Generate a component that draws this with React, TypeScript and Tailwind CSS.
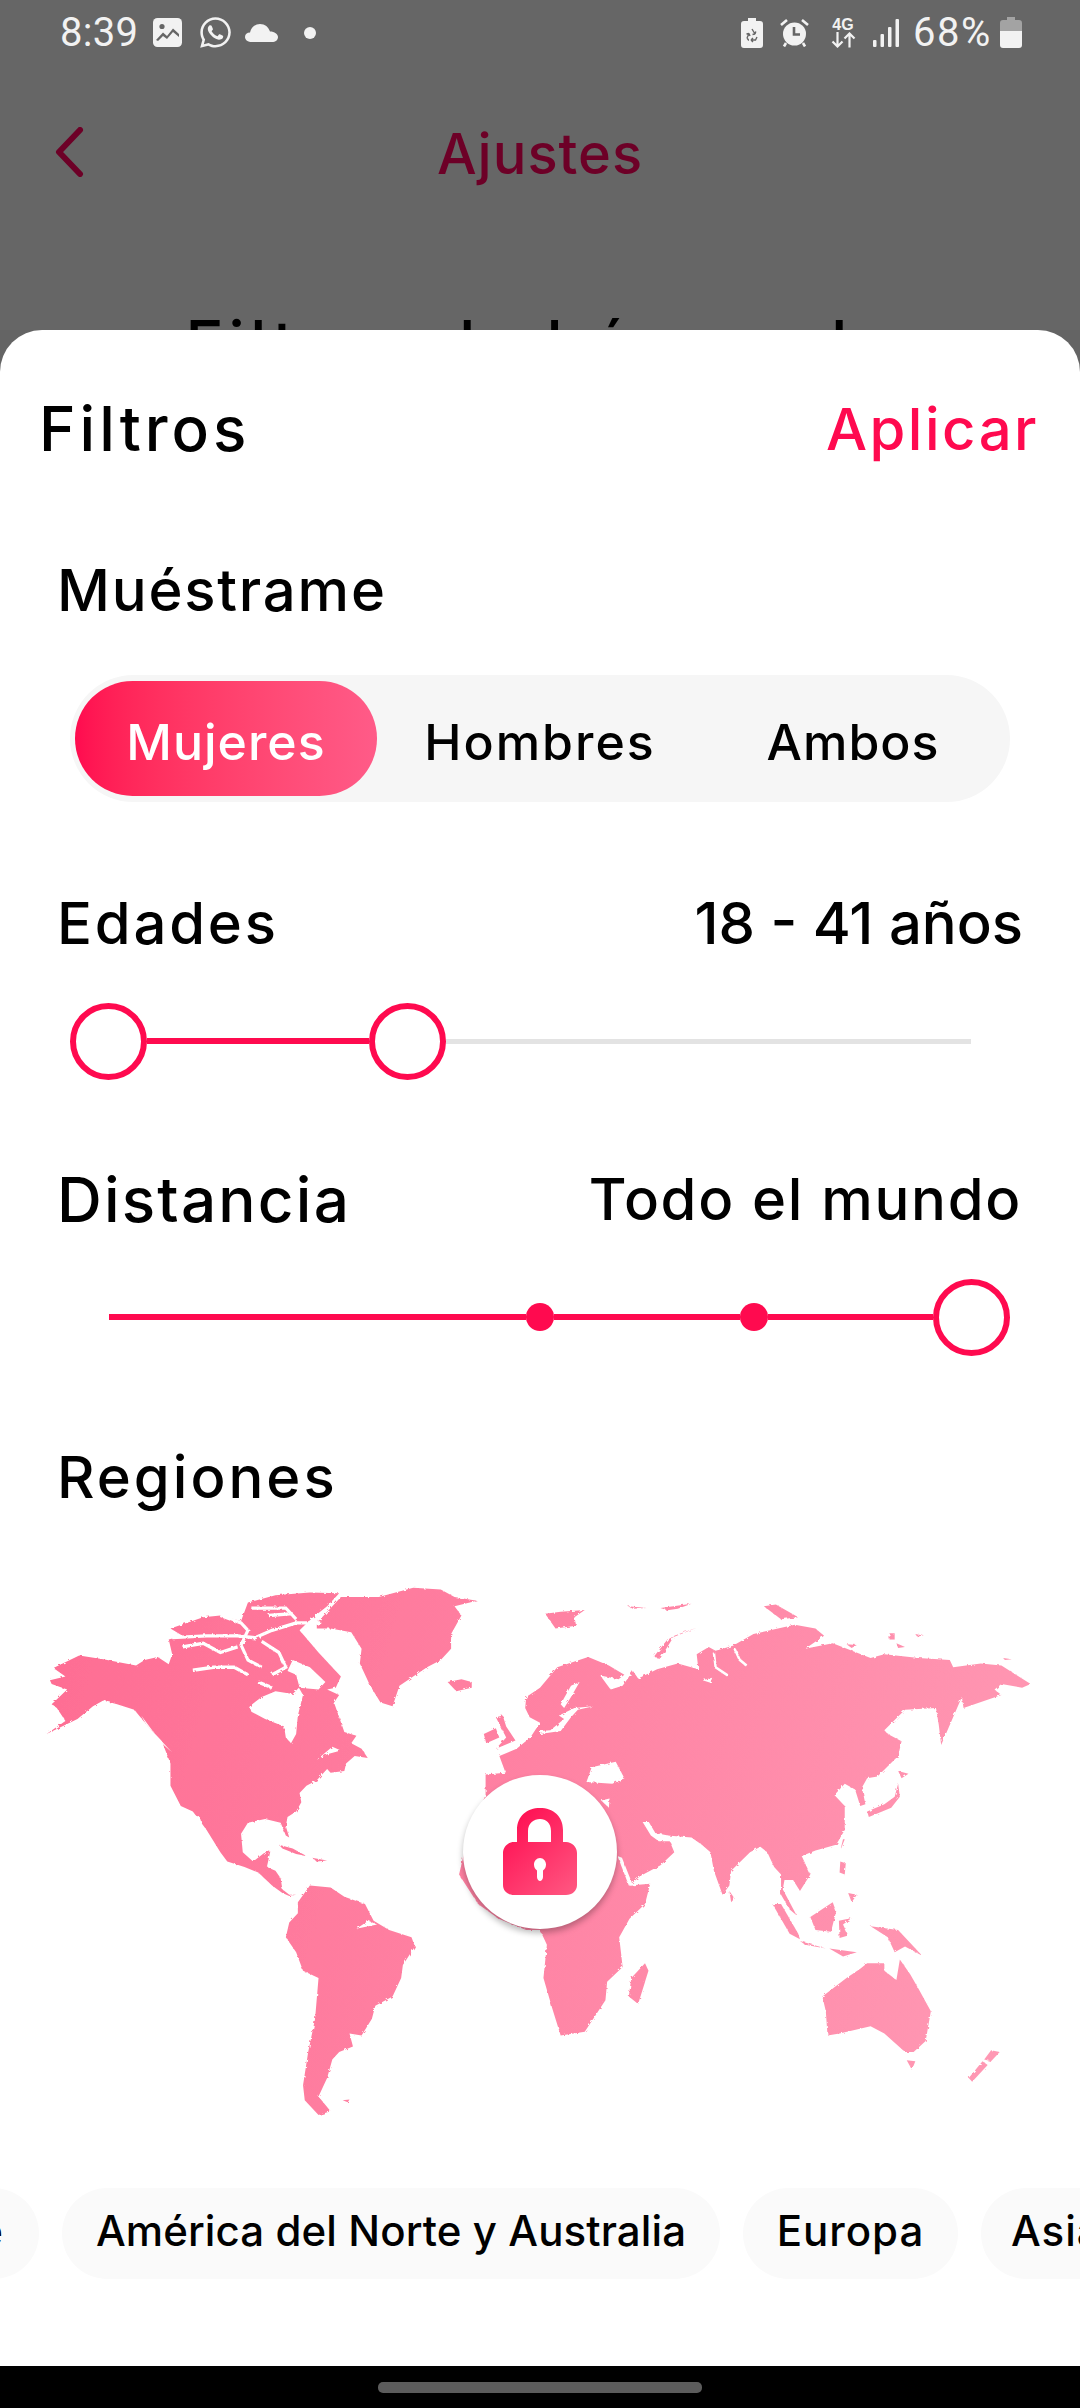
import React from "react";
import { FaWhatsapp } from "react-icons/fa";

const Thumb = () => <div className="w-[77px] h-[77px] shrink-0 rounded-full border-[6px] border-[#ff0a4f] bg-white" />;
const Dot = () => <div className="w-[28px] h-[28px] shrink-0 rounded-full bg-[#ff0a4f]" />;

function WorldMap() {
  const left = "scale(0.34435 0.36996)";
  const right = "translate(540 0) scale(0.34435 0.36996)";
  return (
    <svg width="1080" height="580" viewBox="0 0 1080 580" className="block">
      <defs>
        <linearGradient id="gl" gradientUnits="userSpaceOnUse" x1="0" y1="0" x2="3136" y2="900">
          <stop offset="0" stopColor="#fe6a91" />
          <stop offset="1" stopColor="#ff9ab5" />
        </linearGradient>
        <linearGradient id="gr" gradientUnits="userSpaceOnUse" x1="-1568" y1="0" x2="1568" y2="900">
          <stop offset="0" stopColor="#fe6a91" />
          <stop offset="1" stopColor="#ff9ab5" />
        </linearGradient>
        <filter id="rough" x="-2%" y="-2%" width="104%" height="104%">
          <feTurbulence type="fractalNoise" baseFrequency="0.3" numOctaves="2" seed="4" />
          <feDisplacementMap in="SourceGraphic" scale="3" />
        </filter>
      </defs>
      <g filter="url(#rough)">
        <g transform={left} fill="url(#gl)">
          {/* North America with the Arctic archipelago */}
          <path d="M155 292L230 258L300 268L395 285L420 270L458 262L490 282L500 255L490 215L530 205L495 185L590 155L640 150L700 165L720 115L800 95L900 88L985 90L950 125L905 158L870 190L925 250L990 315L975 345L950 350L985 365L970 385L1000 465L1035 475L1020 495L1050 510L1068 535L1030 530L1005 550L1000 570L960 575L950 565L920 595L890 610L870 630L875 655L860 680L835 695L830 720L840 750L830 745L815 710L770 700L720 710L700 740L705 790L735 815L770 790L785 788L775 830L800 840L815 860L820 890L840 905L860 905L840 908L820 900L790 880L750 845L710 830L660 815L640 790L600 730L560 680L525 665L495 610L495 550L470 490L430 450L390 405L340 390L300 380L270 395L225 430L135 470L190 435L165 400L150 390L195 350L150 335L145 325L190 315Z" />
          {/* Greenland */}
          <path d="M920 170L990 100L1100 100L1200 75L1280 80L1320 100L1385 110L1320 125L1340 150L1310 200L1310 240L1280 270L1240 290L1160 340L1140 395L1105 385L1075 340L1045 280L1050 240L1020 195L960 185L920 185Z" />
          {/* Iceland, UK, Ireland, Caribbean */}
          <path d="M1300 330L1340 322L1370 330L1370 345L1325 355Z" />
          <path d="M1440 425L1460 420L1470 450L1497 488L1440 510L1470 480Z" />
          <path d="M1405 470L1440 455L1450 480L1412 495Z" />
          <path d="M810 770L850 780L890 800L860 795L820 780Z" />
          <path d="M905 805L950 812L920 815Z" />
          {/* South America */}
          <path d="M865 925L900 880L960 885L1000 910L1060 930L1085 975L1130 1000L1195 1020L1205 1045L1170 1095L1165 1130L1140 1180L1090 1205L1080 1240L1050 1285L1015 1280L1025 1315L985 1330L965 1350L950 1400L925 1450L960 1490L925 1500L885 1460L880 1420L895 1330L915 1240L925 1130L880 1110L860 1060L830 1020L840 980L865 955Z" />
          <path d="M995 1460L1015 1458L1010 1466Z" />
        </g>
        <g transform={left} fill="#ffffff">
          {/* Hudson Bay, Foxe Basin */}
          <path d="M725 395L760 370L800 355L850 362L868 345L880 365L865 420L860 470L845 495L830 480L825 450L770 430L730 410Z" />
          <path d="M850 270L900 290L945 330L925 350L870 345L860 310L835 300Z" />
          <path d="M565 690L580 695L605 770L575 735Z" />
          <path d="M1035 997L1070 975L1095 985L1070 990Z" />
          <path d="M920 540L965 505L990 515L950 525Z" />
          <path d="M410 420L425 445L500 520L470 495Z" />
        </g>
        <g transform={left} fill="none" stroke="#ffffff" strokeWidth="9">
          <path d="M560 298L620 290L680 290L720 310" />
          <path d="M530 235L590 225L640 250L690 235" />
          <path d="M500 210L600 205L690 205L740 210L790 190L860 170L930 170" />
          <path d="M640 150L700 170L720 190L700 230L720 270L760 290" />
          <path d="M730 130L830 130L860 160" />
          <path d="M760 220L810 250L830 290L790 310" />
          <path d="M780 150L850 145" />
          <path d="M750 330L790 345" />
        </g>
        <g transform={right} fill="url(#gr)">
          {/* Eurasia + Africa */}
          <path d="M-158 635L-158 580L-100 575L-118 530L-68 510L-28 480L0 440L-30 425L-43 400L-40 370L0 345L50 290L140 262L200 285L245 310L228 322L175 312L205 350L240 340L270 300L285 320L340 295L400 280L460 295L455 255L490 235L510 245L560 232L620 200L740 175L800 185L825 205L770 240L850 225L960 265L1000 255L1100 265L1190 270L1200 290L1280 280L1340 285L1425 335L1400 345L1340 335L1320 350L1340 365L1230 400L1225 370L1165 500L1158 445L1150 400L1060 405L1000 460L1010 470L1050 490L1040 530L980 585L950 590L935 615L945 660L930 665L915 620L885 605L855 635L885 665L885 730L860 770L800 785L760 800L785 850L755 895L735 865L710 865L705 890L745 960L725 945L700 905L700 850L680 830L660 790L640 775L610 790L555 840L550 880L530 905L505 840L495 790L470 770L440 750L370 745L390 790L350 825L290 855L260 880L320 875L305 930L260 970L230 1020L240 1100L195 1140L190 1190L130 1275L60 1285L35 1210L10 1130L20 1040L0 1000L-40 1000L-120 970L-180 930L-235 850L-210 750Z" />
          {/* Islands */}
          <path d="M330 262L370 215L455 183L390 205L350 265Z" />
          <path d="M15 145L60 140L130 135L100 155L105 178L45 185Z" />
          <path d="M255 125L310 130L270 132Z" />
          <path d="M350 130L440 118L400 132L370 136Z" />
          <path d="M650 125L685 120L750 155L700 160Z" />
          <path d="M1015 198L1030 198L1030 215L1015 215Z" />
          <path d="M1035 225L1060 235L1040 238Z" />
          <path d="M1090 200L1115 205L1095 207Z" />
          <path d="M1345 265L1370 268L1350 270Z" />
          <path d="M890 228L920 230L905 238Z" />
          <path d="M950 680L1000 660L1030 640L1040 605L1045 640L1020 670L955 695Z" />
          <path d="M1040 570L1070 578L1050 590Z" />
          <path d="M880 755L885 755L872 785Z" />
          <path d="M872 815L888 820L885 850L870 845Z" />
          <path d="M895 900L920 905L905 925Z" />
          <path d="M785 965L850 925L860 950L845 1005L800 1000Z" />
          <path d="M675 930L700 930L750 1010L755 1025L725 1010Z" />
          <path d="M755 1030L830 1050L770 1040Z" />
          <path d="M840 1050L920 1060L880 1072Z" />
          <path d="M868 975L905 968L880 985L895 1015L870 1022Z" />
          <path d="M960 990L1040 1000L1110 1070L1060 1045L1030 1060L1010 1020Z" />
          <path d="M550 895L565 915L555 925Z" />
          <path d="M305 1090L315 1110L285 1200L258 1180L265 1130Z" />
          <path d="M820 1180L890 1130L930 1105L950 1090L1000 1090L1000 1110L1035 1135L1045 1080L1075 1120L1100 1160L1135 1220L1120 1300L1085 1330L1060 1330L1000 1280L960 1260L870 1280L835 1285L830 1220Z" />
          <path d="M1065 1352L1090 1355L1080 1378Z" />
          <path d="M1310 1325L1335 1330L1310 1355L1290 1350Z" />
          <path d="M1285 1355L1245 1400L1255 1410L1300 1365Z" />
        </g>
        <g transform={right} fill="#ffffff">
          {/* Inland seas */}
          <path d="M0 462L30 460L70 430L55 420L100 400L155 395L110 405L90 425L60 462L0 470Z" />
          <path d="M60 390L90 340L115 330L90 370L70 400Z" />
          <path d="M135 600L150 560L220 545L245 590L210 605Z" />
          <path d="M298 708L316 708L335 738L372 745L390 770L378 760L345 760L322 745Z" />
          <path d="M225 800L238 805L270 880L258 880Z" />
          <path d="M178 650L202 645L200 670Z" />
          <path d="M472 325L500 318L495 332Z" />
        </g>
        <g transform={right} fill="none" stroke="#ffffff" strokeWidth="7">
          <path d="M505 250L510 290L545 312" />
          <path d="M565 240L580 270L600 285" />
        </g>
      </g>
    </svg>
  );
}

function Lock() {
  return (
    <svg width="74" height="90" viewBox="0 0 74 90">
      <defs>
        <linearGradient id="lk" x1="0.1" y1="0" x2="0.9" y2="1">
          <stop offset="0" stopColor="#ff0a4f" />
          <stop offset="1" stopColor="#ff5580" />
        </linearGradient>
      </defs>
      <path
        fillRule="evenodd"
        fill="url(#lk)"
        d="M14 35V23C14 9 24 1 37 1S60 9 60 23V35H63C69 35 74 40 74 46V78C74 84 69 88 63 88H11C5 88 0 84 0 78V46C0 40 5 35 11 35ZM25 35H48V24C48 16 43 12 37 12S25 16 25 24ZM37 51C33.500 51 31 54 31 57.500C31 60 32 62 34 63.500V70C34 72 35.500 74 37 74S40 72 40 70V63.500C42 62 43 60 43 57.500C43 54 40.500 51 37 51Z"
      />
    </svg>
  );
}

export default function App() {
  return (
    <div className="w-[1080px] h-[2408px] overflow-hidden flex flex-col bg-[#646464] text-black font-['Inter',sans-serif] font-medium">
      <div className="h-[330px] shrink-0 overflow-hidden bg-[#666666] flex flex-col">
        {/* status bar */}
        <div className="h-[65px] shrink-0 flex items-center pl-[60px] pr-[58px] text-[#f2f2f2] font-['Roboto',sans-serif] font-normal">
          <span className="text-[40px] leading-[44px] w-[75px] tracking-[0.300px]">8:39</span>
          <svg className="ml-[18px]" width="29" height="29" viewBox="0 0 29 29">
            <rect width="29" height="29" rx="4.5" fill="#f2f2f2" />
            <circle cx="9" cy="8.5" r="2.6" fill="#666" />
            <path d="M3 22L10 14.5L14 18L20 10.5L26 16V19L20 14L14 21L10 18L5 23Z" fill="#666" />
          </svg>
          <FaWhatsapp className="ml-[16px]" size={35} />
          <svg className="ml-[12px]" width="33" height="18" viewBox="0 0 33 18">
            <path d="M7 18C3 18 0 16 0 13S2 8.5 5 8.5C6 3.5 10 0 15 0C20 0 23.500 3 25 7.500C29.500 7.500 33 10 33 13S30.500 18 27 18Z" fill="#f2f2f2" />
          </svg>
          <div className="ml-[26px] w-[12px] h-[12px] rounded-full bg-[#f2f2f2]" />
          <div className="flex-1" />
          <svg width="22" height="30" viewBox="0 0 22 30">
            <path d="M7 0H15V3H19C21 3 22 4 22 6V27C22 29 21 30 19 30H3C1 30 0 29 0 27V6C0 4 1 3 3 3H7Z" fill="#f2f2f2" />
            <path d="M11 11L14 16M14 16L11.500 16.500M14 16L14.800 13.500M16 19L14.500 22H10M10 22L12 20M10 22L12 24M6 20L8 15.500M8 15.500L5.500 16M8 15.500L9 18M6 20L7.500 22H8" stroke="#666" strokeWidth="1.4" fill="none" />
          </svg>
          <svg className="ml-[17px]" width="29" height="28" viewBox="0 0 29 28">
            <circle cx="14.5" cy="15" r="11.500" fill="#f2f2f2" />
            <path d="M14 8V15.500H20" stroke="#666" strokeWidth="2.6" fill="none" />
            <path d="M1 6L7 1M28 6L22 1M6 24L4 27.500M23 24L25 27.500" stroke="#f2f2f2" strokeWidth="2.6" fill="none" />
          </svg>
          <div className="ml-[21px] w-[26px] flex flex-col items-center">
            <span className="text-[16px] leading-[15px] font-bold font-['Liberation_Sans',sans-serif]">4G</span>
            <svg width="25" height="16" viewBox="0 0 25 16">
              <path d="M6.500 0V14M1.500 9.500L6.500 14.500L11.500 9.500M18.500 15.500V2M13.500 6.500L18.500 1.500L23.500 6.500" stroke="#f2f2f2" strokeWidth="2.2" fill="none" />
            </svg>
          </div>
          <svg className="ml-[17px]" width="26" height="28" viewBox="0 0 26 28">
            <rect x="0" y="21" width="3.500" height="7" rx="1" fill="#f2f2f2" />
            <rect x="7.500" y="15" width="3.500" height="13" rx="1" fill="#f2f2f2" />
            <rect x="15" y="8" width="3.500" height="20" rx="1" fill="#f2f2f2" />
            <rect x="22.500" y="0" width="3.500" height="28" rx="1" fill="#f2f2f2" />
          </svg>
          <span className="ml-[14px] text-[40px] leading-[44px] w-[79px] whitespace-nowrap tracking-[1.500px]">68%</span>
          <svg className="ml-[8px]" width="22" height="31" viewBox="0 0 22 31">
            <path d="M7 0H15V3H19C21 3 22 4 22 6V14H0V6C0 4 1 3 3 3H7Z" fill="#a3a3a3" />
            <path d="M0 14H22V28C22 30 21 31 19 31H3C1 31 0 30 0 28Z" fill="#f2f2f2" />
          </svg>
        </div>
        {/* page header behind the sheet */}
        <div className="relative mt-[36px] h-[106px] shrink-0 flex items-center justify-center text-[#6d0027]">
          <svg className="absolute left-[54px] top-[26px]" width="30" height="50" viewBox="0 0 30 50">
            <path d="M26 3L5 25L26 47" stroke="#6d0027" strokeWidth="6" strokeLinecap="round" strokeLinejoin="round" fill="none" />
          </svg>
          <span className="text-[56px] leading-[64px] tracking-[1px]">Ajustes</span>
        </div>
        <div className="mt-[103px] h-[68px] shrink-0 text-center text-[64px] leading-[68px] tracking-[5.500px] text-black whitespace-nowrap">
          Filtros de búsqueda
        </div>
      </div>

      <div className="flex-1 bg-white rounded-t-[42px] flex flex-col overflow-hidden">
        <div className="mt-[67px] h-[64px] flex items-center justify-between pl-[39px] pr-[41px]">
          <span className="text-[62px] tracking-[4px] leading-[64px]">Filtros</span>
          <span className="text-[58px] tracking-[2.500px] leading-[64px] text-[#ff0a4f]">Aplicar</span>
        </div>
        <div className="mt-[99px] h-[60px] flex items-center pl-[57px]">
          <span className="text-[58px] tracking-[1.800px] leading-[60px]">Muéstrame</span>
        </div>
        <div className="mt-[55px] h-[127px] mx-[70px] rounded-full bg-[#f6f6f6] flex items-center pl-[5px] text-[50px] leading-[60px]">
          <div className="w-[302px] h-[115px] pt-[6px] rounded-full bg-gradient-to-r from-[#ff0a4f] to-[#ff5b88] text-white flex items-center justify-center tracking-[1px]">Mujeres</div>
          <div className="w-[326px] pt-[6px] text-center tracking-[2px]">Hombres</div>
          <div className="w-[300px] pt-[6px] text-center tracking-[1px]">Ambos</div>
        </div>
        <div className="mt-[91px] h-[60px] flex items-center justify-between pl-[57px] pr-[57px] text-[58px] leading-[60px]">
          <span className="tracking-[2.800px]">Edades</span>
          <span>18 - 41 años</span>
        </div>
        <div className="mt-[49px] h-[78px] ml-[70px] flex items-center">
          <Thumb />
          <div className="w-[222px] h-[6px] bg-[#ff0a4f]" />
          <Thumb />
          <div className="w-[525px] h-[5px] bg-[#e3e3e3]" />
        </div>
        <div className="mt-[90px] h-[60px] flex items-center justify-between pl-[57px] pr-[58px] leading-[60px]">
          <span className="text-[62px] tracking-[2.200px]">Distancia</span>
          <span className="text-[58px] tracking-[1.700px] -mt-[2px]">Todo el mundo</span>
        </div>
        <div className="mt-[48px] h-[78px] ml-[109px] flex items-center">
          <div className="w-[417px] h-[6px] bg-[#ff0a4f]" />
          <Dot />
          <div className="w-[186px] h-[6px] bg-[#ff0a4f]" />
          <Dot />
          <div className="w-[165px] h-[6px] bg-[#ff0a4f]" />
          <Thumb />
        </div>
        <div className="mt-[91px] h-[60px] flex items-center pl-[57px]">
          <span className="text-[58px] tracking-[3px] leading-[60px]">Regiones</span>
        </div>
        <div className="relative mt-[53px] h-[580px] shrink-0">
          <WorldMap />
          <div className="absolute left-[463px] top-[215px] w-[154px] h-[154px] rounded-full bg-white shadow-[0_4px_6px_rgba(0,0,0,0.28)] flex items-center justify-center">
            <Lock />
          </div>
        </div>
        <div className="mt-[48px] h-[91px] shrink-0 flex gap-[23px] -ml-[161px] text-[42px] leading-[50px] whitespace-nowrap">
          <div className="w-[200px] shrink-0 pb-[6px] rounded-full bg-[#fafafa] flex items-center justify-end pr-[36px]">Oriente</div>
          <div className="w-[658px] shrink-0 pb-[6px] rounded-full bg-[#fafafa] flex items-center justify-center tracking-[0.100px]">América del Norte y Australia</div>
          <div className="w-[215px] shrink-0 pb-[6px] rounded-full bg-[#fafafa] flex items-center justify-center tracking-[1px]">Europa</div>
          <div className="w-[300px] shrink-0 pb-[6px] rounded-full bg-[#fafafa] flex items-center pl-[30px] tracking-[1px]">Asia</div>
        </div>
      </div>

      <div className="h-[42px] shrink-0 bg-black flex justify-center pt-[16px]">
        <div className="w-[324px] h-[11px] rounded-[5px] bg-[#5c5c5c]" />
      </div>
    </div>
  );
}
